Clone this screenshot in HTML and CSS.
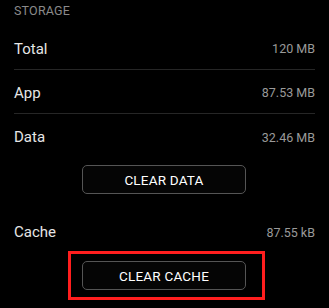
FILE: index.html
```html
<!DOCTYPE html>
<html>
<head>
<meta charset="utf-8">
<link rel="stylesheet" href="styles.css">
</head>
<body>
<div class="screen">
  <div class="section-title">STORAGE</div>
  <div class="row divided"><span class="label">Total</span><span class="value">120 MB</span></div>
  <div class="row divided"><span class="label">App</span><span class="value">87.53 MB</span></div>
  <div class="row"><span class="label">Data</span><span class="value">32.46 MB</span></div>
  <div class="btn-line"><button class="btn">CLEAR DATA</button></div>
  <div class="row cache"><span class="label">Cache</span><span class="value">87.55 kB</span></div>
  <div class="highlight"><button class="btn">CLEAR CACHE</button></div>
</div>
</body>
</html>
```
FILE: styles.css
```css
* { box-sizing: border-box; }
html, body { margin: 0; padding: 0; background: #000; }
body { font-family: Roboto, "Noto Sans", sans-serif; color: #e8e8e8; }
.screen { width: 329px; height: 308px; overflow: hidden; background: #000; }
.section-title {
  height: 26px;
  padding-left: 14px;
  font-size: 12.5px;
  line-height: 21px;
  color: #8a8a8a;
  letter-spacing: 0.2px;
}
.row {
  height: 44px;
  margin: 0 14px;
  padding-top: 2px;
  display: flex;
  align-items: center;
  justify-content: space-between;
}
.row.divided { border-bottom: 1px solid #262626; }
.row.cache { height: 42px; padding-top: 4px; margin-top: 15px; }
.label { font-size: 15px; color: #e6e6e6; }
.value { font-size: 12.5px; color: #9a9a9a; }
.btn-line { margin-top: 7px; padding-left: 82px; }
.btn {
  display: block;
  width: 164px;
  height: 29px;
  padding: 0;
  border: 1px solid #555;
  border-radius: 5px;
  background: #050505;
  color: #ffffff;
  font-family: Roboto, "Noto Sans", sans-serif;
  font-size: 13.5px;
  font-weight: 400;
  letter-spacing: 0.2px;
}
.highlight {
  margin-left: 68px;
  width: 197px;
  height: 49px;
  padding: 7px 0 0 11px;
  border: 3px solid #ff1e1e;
}
```
